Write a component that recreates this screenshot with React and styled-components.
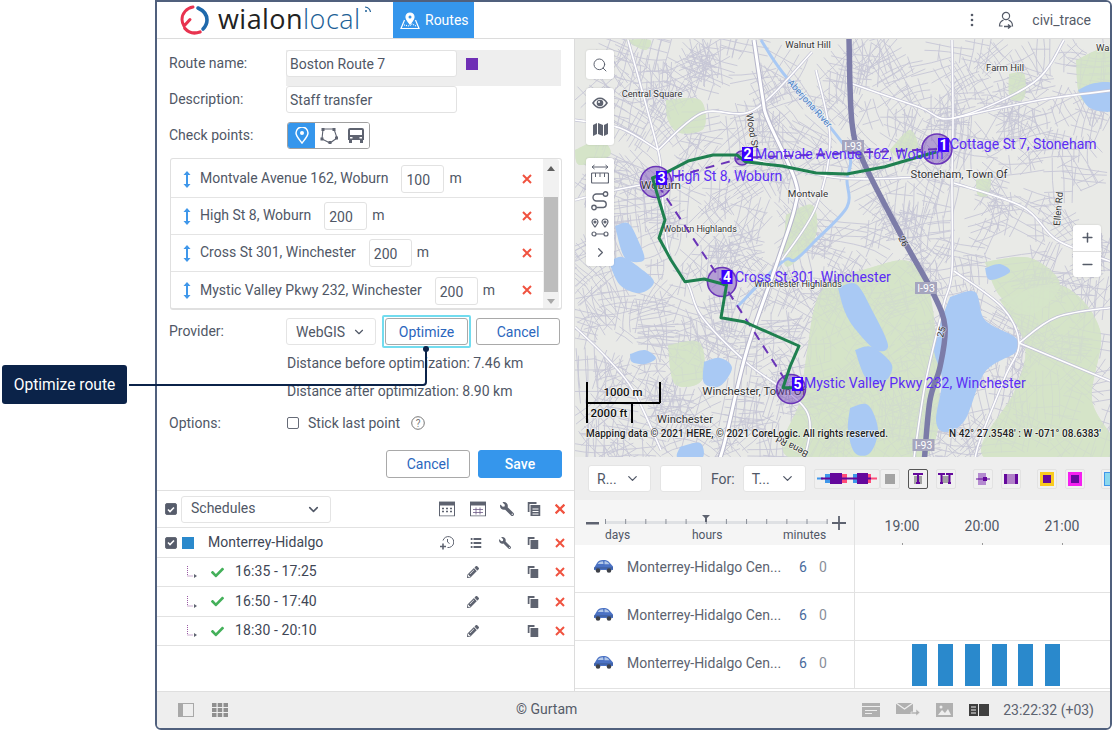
import React from 'react';
import styled, { createGlobalStyle } from 'styled-components';
import { FaWrench, FaPencilAlt, FaCheck } from 'react-icons/fa';
import { ChevronDown, ChevronRight, Search, Plus, Minus } from 'lucide-react';

const GlobalStyle = createGlobalStyle`
  html, body { margin: 0; height: 100%; overflow: hidden; background: #fff; }
  body { font-family: Roboto, "Liberation Sans", sans-serif; font-size: 14px; color: #505766; }
  * { box-sizing: border-box; }
`;

const Page = styled.div`position: relative; width: 1113px; height: 730px; padding-left: 155px;`;
const Frame = styled.div`
  width: 957px; height: 730px; border: 2px solid #50607d; border-radius: 0 6px 6px 6px;
  display: flex; flex-direction: column; overflow: hidden; background: #fff;
`;
const Header = styled.header`
  height: 37px; flex: none; display: flex; align-items: stretch; border-bottom: 1px solid #dcdcdc; background: #fff;
`;
const Logo = styled.div`width: 236px; display: flex; align-items: center; padding-left: 23px; gap: 8px; flex: none;`;
const Wordmark = styled.span`
  font-family: "Open Sans", sans-serif; font-weight: 400; font-size: 27px; line-height: 30px; color: #222;
  letter-spacing: 0.45px; position: relative; top: -1px;
  b { font-weight: 300; color: #1d5f96; }
`;
const Tab = styled.div`
  width: 81px; background: #3596ec; color: #fff; display: flex; align-items: center; gap: 5px; padding-left: 7px; font-size: 14px;
`;
const HeaderRight = styled.div`
  margin-left: auto; display: flex; align-items: center; padding-right: 19px; color: #555b68; font-size: 14px;
`;
const UserName = styled.span`margin-left: 18px;`;
const UserIcon = styled.span`display: flex; margin-left: 24px;`;

const Main = styled.div`flex: 1; display: flex; min-height: 0;`;
const Left = styled.div`width: 418px; flex: none; display: flex; flex-direction: column; border-right: 1px solid #dcdcdc;`;
const Form = styled.div`padding: 11px 13px 0 12px; height: 451px; flex: none;`;
const Row = styled.div`
  display: grid; grid-template-columns: 117px 1fr; align-items: ${p => p.$align || 'start'};
  margin-top: ${p => p.$mt || 0}px;
`;
const Label = styled.div`line-height: 26px; color: #505766;`;
const NameCell = styled.div`height: 36px; background: #eeeeee; display: flex; align-items: flex-start;`;
const Input = styled.div`
  width: ${p => p.$w || 171}px; height: ${p => p.$h || 27}px; background: #fff; border: 1px solid #e2e2e2; border-radius: 3px;
  padding-left: 3px; line-height: 26px; color: #505766; flex: none;
`;
const Swatch = styled.div`width: 12px; height: 12px; background: ${p => p.$c}; margin: ${p => p.$m || '8px 0 0 9px'};`;
const Seg = styled.div`
  width: 83px; height: 27px; display: flex; border: 1px solid #a0a0a0; border-radius: 3px; overflow: hidden; margin-left: 1px;
`;
const SegItem = styled.div`
  width: ${p => p.$w || 27}px; display: flex; align-items: center; justify-content: center; background: ${p => p.$on ? '#3596ec' : '#fff'};
`;
const ListBox = styled.div`
  margin: 9px 0 0 1px; height: 152px; border: 1px solid #e0e0e0; border-bottom-width: 2px; border-radius: 3px; display: flex; padding-top: 2px; width: 392px;
`;
const ListRows = styled.div`flex: 1; min-width: 0;`;
const Point = styled.div`
  height: 37px; display: flex; align-items: center; border-bottom: 1px solid #e4e4e4; padding-left: 12px; position: relative;
  &:last-child { border-bottom: 0; }
`;
const PointName = styled.span`margin-left: 9px; margin-right: 13px; color: #505766; white-space: nowrap; position: relative; top: -1px;`;
const Unit = styled.span`margin-left: 5px; position: relative; top: -1px;`;
const PointDel = styled.span`position: absolute; left: 351px; top: 13px; display: flex;`;
const SmallInput = styled(Input)`width: 43px; height: 28px; line-height: 28px; padding-left: 4px; font-size: 14px;`;
const Scroll = styled.div`width: 16px; background: #f1f1f1; position: relative; margin-top: -2px; flex: none; display: flex; flex-direction: column; align-items: center; margin-right: 2px; border-radius: 0 3px 3px 0;`;
const Thumb = styled.div`position: absolute; left: 1px; right: 1px; top: 38px; height: 95px; background: #bdbdbd;`;
const Arrow = styled.div`
  position: absolute; left: 4px; width: 0; height: 0; border-left: 4px solid transparent; border-right: 4px solid transparent;
  ${p => p.$up ? 'top: 7px; border-bottom: 5px solid #5f5f5f;' : 'bottom: 4px; border-top: 5px solid #a8a8a8;'}
`;
const Controls = styled.div`display: flex; align-items: flex-start;`;
const Select = styled.div`
  width: ${p => p.$w}px; height: 27px; background: #fff; border: 1px solid #e4e4e4; border-radius: 3px; display: flex; align-items: center;
  justify-content: space-between; padding: 0 ${p => p.$pr || 9}px 0 ${p => p.$pl || 9}px; color: #505766; flex: none;
`;
const Btn = styled.button`
  width: ${p => p.$w || 84}px; height: 27px; font: inherit; padding: 0; border: 1px solid ${p => p.$primary ? '#3596ec' : '#a9a9a9'};
  border-radius: 3px; background: ${p => p.$primary ? '#3596ec' : '#fff'}; color: ${p => p.$primary ? '#fff' : '#2b66bd'};
  font-weight: ${p => p.$primary ? 500 : 400}; flex: none;
`;
const FocusRing = styled.div`
  padding: 1px; border: 2px solid #72dcef; margin: -3px 5px 0 6px; height: 33px; border-radius: 2px; flex: none;
`;
const DistanceLine = styled.div`margin-left: 118px; margin-top: ${p => p.$mt || 0}px; line-height: 28px; color: #505766; white-space: nowrap;`;
const Check = styled.span`
  width: 12px; height: 12px; border-radius: 2px; border: 1px solid #666b77; background: ${p => p.$on ? '#565c6b' : '#fff'};
  display: inline-flex; align-items: center; justify-content: center; flex: none;
`;
const Stick = styled.div`display: flex; align-items: center; height: 26px; margin-left: 1px;`;
const StickText = styled.span`margin-left: 9px; margin-right: 11px; white-space: nowrap;`;
const Actions = styled.div`display: flex; justify-content: flex-end; gap: 8px; margin-top: 14px; margin-right: -1px; button { height: 28px; }`;

const Sched = styled.div`border-top: 1px solid #e0e0e0; flex: 1;`;
const SchedRow = styled.div`
  height: ${p => p.$h || 29}px; border-bottom: 1px solid #e2e2e2; display: flex; align-items: center; position: relative; padding-left: ${p => p.$pl || 8}px;
`;
const RowIcons = styled.div`position: absolute; left: 0; top: 0; bottom: 0; right: 0;`;
const IconAt = styled.span`position: absolute; left: ${p => p.$x - 157}px; top: 50%; transform: translate(-50%, -50%); display: flex;`;
const SchedName = styled.span`margin-left: 14px; color: #404655; position: relative; top: -1px;`;
const SchedSelectText = styled.span`position: relative; top: -1px;`;
const TimeText = styled.span`color: #404655; margin-left: 11px; letter-spacing: 0.1px; position: relative; top: -1px;`;
const ElbowWrap = styled.span`display: flex; margin-left: 22px;`;
const CheckWrap = styled.span`display: flex; margin-left: 14px; color: #44b05a;`;

const Right = styled.div`flex: 1; min-width: 0; display: flex; flex-direction: column;`;
const MapPane = styled.div`height: 418px; position: relative; overflow: hidden; flex: none; background: #e9eae7;`;
const MapSvg = styled.svg`display: block; width: 536px; height: 418px;`;
const MapLabel = styled.text`
  font-family: Roboto, sans-serif; font-size: ${p => p.$s || 9.5}px; fill: ${p => p.$c || '#333'}; font-weight: ${p => p.$w || 400};
  paint-order: stroke; stroke: rgba(255,255,255,.65); stroke-width: 1.4px;
`;
const PointLabel = styled.text`font-family: Roboto, sans-serif; font-size: 14px; fill: #5b2df5;`;
const PointNum = styled.text`font-family: Roboto, sans-serif; font-size: 14px; fill: #fff; font-weight: 700;`;
const ToolGroup = styled.div`
  position: absolute; left: 11px; top: ${p => p.$t}px; width: 28px; height: ${p => p.$h}px; background: #fff; border-radius: 3px;
  display: flex; flex-direction: column; align-items: center; justify-content: space-around; box-shadow: 0 0 2px rgba(0,0,0,.15); padding: 2px 0;
`;
const ZoomBox = styled.div`
  position: absolute; left: 498px; top: 186px; width: 28px; height: 52px; background: #fff; border-radius: 3px; color: #555b68;
  display: flex; flex-direction: column; box-shadow: 0 0 2px rgba(0,0,0,.15);
  span { flex: 1; display: flex; align-items: center; justify-content: center; }
  span + span { border-top: 1px solid #ddd; }
`;

const Toolbar = styled.div`height: 43px; background: #eeeeee; display: flex; align-items: center; padding-left: 13px; flex: none; overflow: hidden;`;
const ForLabel = styled.span`margin: 0 8px 0 9px; color: #505766;`;
const TwoBlank = styled.div`width: 42px; height: 27px; background: #fff; border: 1px solid #e4e4e4; border-radius: 3px; margin-left: 9px; flex: none;`;
const TbIcon = styled.div`
  width: ${p => p.$w || 20}px; height: 20px; background: #f0f0f0; border: ${p => p.$on ? '1px solid #555' : '1px solid #e2e2e2'}; border-radius: 2px;
  margin-left: ${p => p.$ml || 0}px; display: flex; align-items: center; justify-content: center; flex: none;
`;

const Timeline = styled.div`flex: 1; display: grid; grid-template-columns: 280px 1fr; grid-template-rows: 45px repeat(3, 48px); min-height: 0;`;
const SliderCell = styled.div`background: #f5f5f5; border-right: 1px solid #e2e2e2; position: relative;`;
const TimeCell = styled.div`background: #f5f5f5; display: flex; position: relative; color: #505766;`;
const Hour = styled.div`
  width: 80px; text-align: center; padding-top: 17px; line-height: 18px; position: relative; flex: none;
  &::after { content: ''; position: absolute; left: 50%; bottom: 0; width: 1px; height: 2px; background: #999; }
`;
const HourPad = styled.div`width: 7px; flex: none;`;
const SlideLabel = styled.span`position: absolute; left: ${p => p.$x}px; top: 28px; font-size: 12px; line-height: 14px; color: #505766;`;
const UnitCell = styled.div`
  border-right: 1px solid #e2e2e2; border-bottom: 1px solid #e2e2e2; background: #fff; display: flex; align-items: center; padding: 0 0 4px 19px;
`;
const UnitName = styled.span`margin-left: 14px; width: 154px; white-space: nowrap; color: #5c6370;`;
const Six = styled.span`margin-left: 18px; color: #4a6a9c;`;
const Zero = styled.span`margin-left: 12px; color: #8a8f99;`;
const GanttCell = styled.div`border-bottom: 1px solid #e2e2e2; background: #fff; position: relative; display: flex; align-items: flex-start; padding-top: ${p => p.$pt || 0}px;`;
const Bar = styled.div`width: 15px; height: 42px; background: #2a89cc; flex: none; margin-left: ${p => p.$ml}px;`;

const StatusBar = styled.footer`
  height: 37px; flex: none; background: #eeeeee; border-top: 1px solid #dfdfdf; display: flex; align-items: center; color: #555b68;
`;
const StatusLeft = styled.div`display: flex; align-items: center; gap: 18px; padding-left: 21px; width: 359px; flex: none;`;
const StatusRight = styled.div`display: flex; align-items: center; margin-left: auto; padding-right: 16px; gap: 16px;`;
const Clock = styled.span`margin-left: -2px; color: #5c6370;`;
const Copyright = styled.span`color: #555b68; position: relative; top: -1px;`;

const Callout = styled.div`
  position: absolute; left: 2px; top: 365px; width: 125px; height: 39px; background: #0b2349; border-radius: 3px; color: #fff;
  display: flex; align-items: center; justify-content: center; font-size: 15.6px;
`;
const Leader = styled.svg`position: absolute; left: 0; top: 0; width: 1113px; height: 730px; pointer-events: none;`;

/* ---------- icons ---------- */
const XMark = ({ s = 10 }) => (
  <svg width={s} height={s} viewBox="0 0 10 10"><path d="M1 1l8 8M9 1L1 9" stroke="#f0523f" strokeWidth="2" /></svg>
);
const UpDown = () => (
  <svg width="8" height="17" viewBox="0 0 8 17" fill="#3f97ea"><path d="M4 0l3.500 4h-2.500v9h2.500l-3.500 4-3.500-4h2.500v-9h-2.500z" /></svg>
);
const CopyIcon = () => (
  <svg width="11" height="12" viewBox="0 0 11 12"><path d="M0 0h7v2H2v6H0z" fill="#5e6370" /><rect x="3" y="3" width="8" height="9" fill="#5e6370" /></svg>
);
const CopyList = () => (
  <svg width="13" height="14" viewBox="0 0 13 14"><path d="M0 0h9v2H2v8H0z" fill="#5e6370" /><rect x="3" y="3" width="10" height="11" fill="#5e6370" /><path d="M5 7h6M5 9.500h6M5 12h6" stroke="#fff" /></svg>
);
const CheckMark = () => (
  <svg width="8" height="7" viewBox="0 0 8 7"><path d="M1 3.500l2 2 4-4" stroke="#fff" strokeWidth="1.600" fill="none" /></svg>
);
const Cal = ({ grid }) => (
  <svg width="16" height="15" viewBox="0 0 16 15">
    <rect x=".5" y=".5" width="15" height="14" fill="#fff" stroke="#5e6370" />
    <rect x="0" y="0" width="16" height="4" fill="#5e6370" />
    {grid
      ? <path d="M3 8h10M3 11h10M6 6v7M10 6v7" stroke="#6d5b86" strokeWidth=".8" />
      : <path d="M3 7h2M7 7h2M11 7h2M3 10h2M7 10h2M11 10h2" stroke="#5e6370" strokeWidth="1.400" />}
  </svg>
);
const ElbowIcon = () => (
  <svg width="10" height="14" viewBox="0 0 10 14" fill="none"><path d="M.5 1v10h6" stroke="#9a5aa5" strokeDasharray="1 1" /><path d="M7 9l3 2-3 2z" fill="#5e6370" /></svg>
);
const ClockPlus = () => (
  <svg width="14" height="15" viewBox="0 0 14 15" fill="none" stroke="#5e6370">
    <path d="M3 5a5.500 5.500 0 1 1 4.500 7" /><path d="M7.500 3.500v3l2 1.500" />
    <path d="M3 8v6M0 11h6" strokeWidth="1.600" />
  </svg>
);
const ListIcon = () => (
  <svg width="11" height="10" viewBox="0 0 11 10" fill="#5e6370"><path d="M0 0h2v2H0zM3 0h8v2H3zM0 4h2v2H0zM3 4h8v2H3zM0 8h2v2H0zM3 8h8v2H3z" /></svg>
);
const PinIcon = () => (
  <svg width="14" height="17" viewBox="0 0 14 17" fill="none"><path d="M7 16C3.500 11.500 1 9 1 6a6 6 0 0 1 12 0c0 3-2.500 5.500-6 10z" stroke="#fff" strokeWidth="1.500" /><circle cx="7" cy="6" r="2" fill="#fff" /></svg>
);
const PolyIcon = () => (
  <svg width="18" height="17" viewBox="0 0 18 17" fill="none" stroke="#5e6370">
    <path d="M3 2h11l3 9-7 5-8-4z" strokeWidth="1.100" />
    <g fill="#5e6370" stroke="none"><rect x="1.500" y="1" width="3" height="3" /><rect x="12.500" y="1" width="3" height="3" /><rect x="15" y="9.500" width="3" height="3" /><rect x="8.500" y="14" width="3" height="3" /><rect x="0.500" y="10.500" width="3" height="3" /></g>
  </svg>
);
const BusIcon = () => (
  <svg width="16" height="15" viewBox="0 0 16 15" fill="#5e6370"><path d="M2 0h12a2 2 0 0 1 2 2v10h-1v3h-3v-3H4v3H1v-3H0V2a2 2 0 0 1 2-2zm0 2v5h12V2zM2 9v1.500h2.500V9zm9.500 0v1.500H14V9z" fillRule="evenodd" /></svg>
);
const HelpIcon = () => (
  <svg width="14" height="14" viewBox="0 0 14 14"><circle cx="7" cy="7" r="6.300" fill="none" stroke="#777" /><text x="7" y="10.500" textAnchor="middle" fontFamily="Roboto" fontSize="10" fill="#777">?</text></svg>
);
const RoutesIcon = () => (
  <svg width="20" height="20" viewBox="0 0 20 20" fill="none" stroke="#fff" strokeWidth="1.200">
    <path d="M4.500 10L1 18.500h18L15.500 10" /><path d="M10 14c-2.500-3-4-4.500-4-7a4 4 0 0 1 8 0c0 2.500-1.500 4-4 7z" fill="#fff" />
    <circle cx="10" cy="7" r="1.500" fill="#3596ec" stroke="none" /><path d="M4 15l5 1 3-2 4 2" strokeDasharray="1 1" />
  </svg>
);
const LogoRing = () => (
  <svg width="30" height="30" viewBox="0 0 30 30" fill="none">
    <path d="M13 2C6.500 3 2 8.500 2 14.500c0 2.500.8 4.500 2 6.500L10 14.500" stroke="#e8334f" strokeWidth="3" strokeLinecap="round" />
    <path d="M5 23.500c3.500 4 9 5.500 15 3.500" stroke="#e8334f" strokeWidth="3.400" strokeLinecap="round" />
    <path d="M18 3c5.500 2.500 9 6.500 9 12 0 3.500-1.500 6.500-4 9" stroke="#1f69ab" strokeWidth="3.600" strokeLinecap="round" />
  </svg>
);
const LogoHook = () => (
  <svg width="10" height="10" viewBox="0 0 10 10" fill="none" stroke="#1d5f96" strokeWidth="1.200" style={{ position: 'relative', top: -9, left: -7 }}><path d="M3 1c3 .3 5 2 5.500 5" /><circle cx="4" cy="5" r="1" fill="#1d5f96" stroke="none" /></svg>
);
const KebabIcon = () => (
  <svg width="4" height="14" viewBox="0 0 4 14" fill="#555b68"><circle cx="2" cy="2" r="1.300" /><circle cx="2" cy="7" r="1.300" /><circle cx="2" cy="12" r="1.300" /></svg>
);
const UserIconSvg = () => (
  <svg width="16" height="18" viewBox="0 0 16 18" fill="none" stroke="#555b68" strokeWidth="1.200">
    <circle cx="8" cy="5" r="3.600" /><path d="M5.500 9c-2.500 1-4 3-4 6h3M10.500 9c2.500 1 4 3 4 6h-1" />
    <path d="M6 15.500h6M10 13.500l2.500 2-2.500 2" strokeWidth="1.400" />
  </svg>
);
const EyeIcon = () => (
  <svg width="16" height="12" viewBox="0 0 16 12"><path d="M0 6c2-3.500 5-5.500 8-5.500S14 2.500 16 6c-2 3.500-5 5.500-8 5.500S2 9.500 0 6z" fill="#5e6370" /><path d="M2 6c1.700-2.500 3.800-4 6-4s4.300 1.500 6 4c-1.700 2.500-3.800 4-6 4S3.700 8.500 2 6z" fill="#fff" /><circle cx="8" cy="6" r="3.300" fill="#5e6370" /><circle cx="7" cy="5" r="1" fill="#fff" /></svg>
);
const MapFold = () => (
  <svg width="15" height="13" viewBox="0 0 15 13" fill="#5e6370"><path d="M0 2l4-2v11l-4 2zM5 0l5 2v11l-5-2zM11 2l4-2v11l-4 2z" /></svg>
);
const RulerIcon = () => (
  <svg width="18" height="20" viewBox="0 0 18 20" fill="none" stroke="#5e6370">
    <path d="M1 3h16M1 3l2.500-2M1 3l2.500 2M17 3l-2.500-2M17 3l-2.500 2" />
    <rect x=".500" y="9" width="17" height="10" rx="1" strokeWidth="1.200" /><path d="M4.500 9v4M9 9v4M13.500 9v4" />
  </svg>
);
const RouteIcon = () => (
  <svg width="18" height="20" viewBox="0 0 18 20" fill="none" stroke="#5e6370" strokeWidth="1.400">
    <circle cx="14.500" cy="3" r="2.200" /><circle cx="3" cy="16.500" r="2.200" />
    <path d="M12 3H5.500a3.500 3.500 0 0 0 0 7h7a3.300 3.300 0 0 1 0 6.500H5.500" />
  </svg>
);
const PinsIcon = () => (
  <svg width="18" height="20" viewBox="0 0 18 20" fill="none" stroke="#5e6370" strokeWidth="1.200">
    <path d="M4 9C2 6.500 1 5.500 1 4a3 3 0 0 1 6 0c0 1.500-1 2.500-3 5zM14 9c-2-2.500-3-3.500-3-5a3 3 0 0 1 6 0c0 1.500-1 2.500-3 5z" /><circle cx="4" cy="4" r="1" fill="#5e6370" /><circle cx="14" cy="4" r="1" fill="#5e6370" />
    <circle cx="3" cy="16" r="2" /><circle cx="15" cy="16" r="2" /><path d="M5 16h8" />
  </svg>
);
const CarIcon = () => (
  <svg width="19" height="13" viewBox="0 0 19 13">
    <path d="M0 8l3-5c1-2 3-3 6-3s5 .5 6.500 2.500L19 6.500V10H0z" fill="#4b72c4" />
    <path d="M4 3.500C5 2 7 1.300 9 1.300l.5 2.700H3.800zM10.500 1.300c1.500 0 3 .5 4 1.700l1 1.300h-5z" fill="#b3c8e8" />
    <path d="M0 8h19" stroke="#3a568f" />
    <circle cx="4" cy="10.500" r="2.300" fill="#3e4148" /><circle cx="15" cy="10.500" r="2.300" fill="#3e4148" />
  </svg>
);

/* toolbar glyphs */
const Ptrack = () => (
  <svg width="60" height="13" viewBox="0 0 60 13">
    <path d="M0 6.500h6" stroke="#3f97ea" strokeWidth="2" /><path d="M54 6.500h6" stroke="#ff4d79" strokeWidth="2" />
    <rect x="8" y="2" width="8" height="9" fill="#3f97ea" /><rect x="24" y="2" width="6" height="9" fill="#ff4d79" />
    <rect x="36" y="2" width="8" height="9" fill="#3f97ea" /><rect x="48" y="2" width="6" height="9" fill="#ff4d79" />
    <rect x="13" y="1" width="12" height="11" fill="#64089c" /><rect x="40" y="1" width="11" height="11" fill="#64089c" />
    <path d="M4 6.500h50" stroke="#64089c" strokeWidth="2" />
  </svg>
);
const GreySq = () => <svg width="10" height="10"><rect width="10" height="10" fill="#a3a3a3" /></svg>;
const TIcon = ({ two }) => (
  <svg width={two ? 15 : 10} height="11" viewBox={two ? '0 0 15 11' : '0 0 10 11'}>
    {two ? <>
      <rect x="3" y="3" width="9" height="7" fill="#a3a3a3" />
      <path d="M0 1h7M3.500 1v9M2 10h3M8 1h7M11.500 1v9M10 10h3" stroke="#64089c" strokeWidth="2" fill="none" />
    </> : <>
      <rect x="1" y="3" width="8" height="8" fill="#a3a3a3" />
      <path d="M0 1h10M5 1v9M3 10h4" stroke="#64089c" strokeWidth="2" fill="none" />
    </>}
  </svg>
);
const ConnectIcon = () => (
  <svg width="14" height="12" viewBox="0 0 14 12"><rect x="2" y="0" width="8" height="12" fill="#b48ad0" /><path d="M0 6h14" stroke="#64089c" /><rect x="7" y="4" width="4" height="4" fill="#64089c" /></svg>
);
const BandIcon = () => (
  <svg width="14" height="10" viewBox="0 0 14 10"><rect width="14" height="10" fill="#b080c8" /><rect width="3" height="10" fill="#64089c" /><rect x="11" width="3" height="10" fill="#64089c" /></svg>
);
const FrameSq = ({ c }) => (
  <svg width="14" height="14" viewBox="0 0 14 14"><rect width="14" height="14" fill={c} /><rect x="3" y="3" width="8" height="8" fill="#64089c" /></svg>
);
const CyanIcon = () => (
  <svg width="14" height="14" viewBox="0 0 14 14"><rect x=".5" y=".5" width="13" height="13" fill="#8bd8ee" stroke="#3f97ea" /></svg>
);

/* status glyphs */
const PanelIcon = () => (
  <svg width="16" height="14" viewBox="0 0 16 14"><rect x=".500" y=".500" width="15" height="13" fill="#eee" stroke="#a8a8a8" /><rect width="5" height="14" fill="#a8a8a8" /></svg>
);
const GridIcon = () => (
  <svg width="16" height="14" viewBox="0 0 16 14" fill="#8f8f8f"><path d="M0 0h4.500v4H0zM5.700 0h4.500v4H5.700zM11.500 0H16v4h-4.500zM0 5h4.500v4H0zM5.700 5h4.500v4H5.700zM11.500 5H16v4h-4.500zM0 10h4.500v4H0zM5.700 10h4.500v4H5.700zM11.500 10H16v4h-4.500z" /></svg>
);
const TrayIcon = () => (
  <svg width="18" height="14" viewBox="0 0 18 14"><rect width="18" height="14" fill="#b0b0b0" /><rect y="3" width="18" height="1" fill="#eee" /><path d="M3 7.500h12M3 10.500h7" stroke="#eee" /></svg>
);
const MailIcon = () => (
  <svg width="24" height="14" viewBox="0 0 24 14"><rect width="17" height="11" fill="#b0b0b0" /><path d="M0 0l8.500 6L17 0" stroke="#eee" strokeWidth="1.300" fill="none" /><path d="M15 9h5V6l4 3.500-4 3.500v-2h-5z" fill="#b0b0b0" stroke="#eee" strokeWidth=".6" /></svg>
);
const ImageIcon = () => (
  <svg width="17" height="14" viewBox="0 0 17 14"><rect width="17" height="14" fill="#b0b0b0" /><path d="M2 12l4-5 3 3 3-4 3 6z" fill="#eee" /><circle cx="5" cy="4" r="1.500" fill="#eee" /></svg>
);
const BookIcon = () => (
  <svg width="20" height="12" viewBox="0 0 20 12"><rect width="9" height="12" fill="#3f3f3f" /><rect x="10" width="10" height="12" fill="#3f3f3f" /><path d="M2 3h5M2 6h5M2 9h5" stroke="#eee" /></svg>
);

/* ---------- map drawing ---------- */
const toPath = pts => 'M' + pts.map(p => p.join(' ')).join('L');
function smooth(pts) {
  let d = `M${pts[0][0]} ${pts[0][1]}`;
  for (let i = 0; i < pts.length - 1; i++) {
    const p0 = pts[i - 1] || pts[i], p1 = pts[i], p2 = pts[i + 1], p3 = pts[i + 2] || p2;
    d += `C${(p1[0] + (p2[0] - p0[0]) / 6).toFixed(1)} ${(p1[1] + (p2[1] - p0[1]) / 6).toFixed(1)} ${(p2[0] - (p3[0] - p1[0]) / 6).toFixed(1)} ${(p2[1] - (p3[1] - p1[1]) / 6).toFixed(1)} ${p2[0]} ${p2[1]}`;
  }
  return d;
}
function closed(pts) { return smooth([...pts, pts[0]]) + 'Z'; }

function buildStreets() {
  let seed = 20211;
  const r = () => { seed |= 0; seed = seed + 0x6D2B79F5 | 0; let t = Math.imul(seed ^ seed >>> 15, 1 | seed); t = t + Math.imul(t ^ t >>> 7, 61 | t) ^ t; return ((t ^ t >>> 14) >>> 0) / 4294967296; };
  let d = '';
  for (let i = 0; i < 560; i++) {
    const cx = 575 + r() * 540, cy = 39 + r() * 420;
    const a = r() * Math.PI;
    const ca = Math.cos(a), sa = Math.sin(a);
    const n = 2 + Math.floor(r() * 3);
    const len = 10 + r() * 16;
    const gap = 6 + r() * 4;
    const pt = (u, v) => `${(cx + u * ca - v * sa).toFixed(1)} ${(cy + u * sa + v * ca).toFixed(1)}`;
    for (let k = 0; k < n; k++) {
      const v = (k - n / 2) * gap;
      const b = (r() - .5) * 8;
      d += `M${pt(-len, v)}Q${pt(0, v + b)} ${pt(len, v + (r() - .5) * 4)}`;
    }
    d += `M${pt(-len * .4, -n / 2 * gap)}L${pt(-len * .4, n / 2 * gap)}`;
    if (r() > .5) d += `M${pt(len * .5, -n / 2 * gap)}L${pt(len * .5, n / 2 * gap)}`;
  }
  return d;
}
const STREETS = buildStreets();

const MAJOR = [
  [[628, 40], [640, 83], [658, 150], [661, 173], [668, 250], [688, 284], [702, 317], [747, 363], [806, 410], [805, 458]],
  [[658, 150], [702, 113], [754, 110], [812, 52]],
  [[575, 120], [620, 128], [658, 150]],
  [[850, 83], [919, 107], [954, 118], [1033, 83], [1064, 40]],
  [[954, 118], [1040, 100], [1115, 90]],
  [[816, 70], [830, 140], [816, 207], [782, 260]],
  [[952, 40], [953, 118], [952, 180], [952, 270], [945, 300], [940, 320], [925, 385], [914, 458]],
  [[954, 183], [1023, 207], [1057, 240], [1112, 262]],
  [[954, 271], [1002, 307], [1019, 343], [1005, 377], [981, 437], [975, 458]],
  [[1019, 343], [1115, 383]],
  [[1019, 343], [1057, 317], [1115, 307]],
  [[575, 327], [606, 357], [633, 390], [661, 450]],
  [[737, 155], [840, 178], [952, 175]],
  [[575, 200], [615, 190], [656, 182]],
];
const WATER = [
  [[950, 297], [975, 292], [985, 320], [1016, 338], [1016, 352], [985, 372], [965, 420], [945, 432], [936, 420], [942, 380], [934, 345]],
  [[609, 262], [622, 257], [640, 268], [654, 282], [640, 293], [620, 285]],
  [[615, 226], [628, 223], [638, 240], [644, 260], [625, 258]],
  [[838, 288], [856, 284], [872, 310], [888, 345], [876, 350], [856, 330], [845, 312]],
  [[855, 350], [872, 347], [892, 365], [884, 382], [866, 378]],
  [[850, 408], [868, 405], [878, 430], [870, 453], [855, 453], [848, 430]],
  [[1078, 90], [1095, 83], [1115, 85], [1115, 110], [1090, 108]],
  [[704, 362], [720, 358], [732, 368], [720, 386], [704, 383]],
  [[630, 354], [645, 350], [656, 358], [645, 364], [632, 362]],
  [[680, 447], [700, 443], [702, 458], [678, 458]],
  [[985, 268], [1000, 264], [1010, 272], [990, 280]],
];
const GREEN = [
  [[808, 345], [822, 290], [870, 268], [915, 265], [935, 330], [925, 458], [790, 458], [800, 400]],
  [[1000, 300], [1060, 285], [1100, 330], [1092, 400], [1113, 458], [985, 458], [1015, 390], [1025, 345]],
  [[985, 262], [1030, 258], [1060, 285], [1030, 315], [1000, 296]],
  [[666, 100], [700, 100], [704, 128], [680, 133], [668, 120]],
  [[1009, 74], [1024, 74], [1024, 98], [1010, 98]],
  [[890, 150], [910, 130], [918, 150], [900, 158]],
  [[786, 215], [812, 205], [816, 235], [795, 262], [784, 262]],
  [[1076, 60], [1110, 50], [1113, 102], [1082, 100]],
  [[668, 345], [700, 343], [702, 380], [675, 384]],
  [[625, 40], [650, 40], [645, 50]],
  [[575, 150], [600, 140], [610, 155], [580, 165]],
  [[976, 180], [990, 178], [988, 195], [978, 195]],
];
const ROUTE = [[936.6, 151.7], [919, 156.7], [885, 166.7], [847, 174], [816, 173], [782, 166], [745.5, 161.7], [737, 155], [713, 155], [689, 160.7], [668, 171.7], [652.5, 178], [659, 200], [665, 220], [659, 238], [671, 260], [685, 281.7], [704, 279], [726.5, 285], [721, 317.7], [744, 321.7], [799, 346], [790, 366.7], [783, 387.7], [792, 387.7]];

const CIRCLES = [[937, 149, 15], [742, 158, 7], [656, 182, 15.5], [722, 282, 14.5], [791, 389, 14.5]];
const NUMS = [[938, 138, 1], [742, 147, 2], [656, 171, 3], [721.5, 270, 4], [792, 377, 5]];
const POINT_TEXT = [
  [950, 149, 'Cottage St 7, Stoneham'], [755, 159, 'Montvale Avenue 162, Woburn'], [671, 181, 'High St 8, Woburn'],
  [735, 282, 'Cross St 301, Winchester'], [804, 388, 'Mystic Valley Pkwy 232, Winchester'],
];
const Shield = ({ x, y, t = 'I-93' }) => (
  <g>
    <rect x={x - 11} y={y - 6} width="22" height="12" fill="#a5a5be" />
    <MapLabel x={x} y={y + 4} $c="#fff" $s={10.500} textAnchor="middle" style={{ stroke: 'none' }}>{t}</MapLabel>
  </g>
);
const MapDrawing = () => (
  <MapSvg viewBox="575 39 536 418">
    <rect x="575" y="39" width="540" height="420" fill="#e9eae7" />
    {GREEN.map((g, i) => <path key={i} d={closed(g)} fill="#d3e2c5" />)}
    <path d={STREETS} fill="none" stroke="#c6c6d6" strokeWidth=".9" />
    {GREEN.map((g, i) => <path key={i} d={closed(g)} fill="#d6e4c9" fillOpacity=".72" />)}
    <path d={smooth([[761, 40], [783, 73], [830, 127], [850, 157], [847, 180], [847, 207], [816, 240], [795, 260], [782, 262], [737, 307]])} fill="none" stroke="#a9c9f4" strokeWidth="3" />
    {WATER.map((g, i) => <path key={i} d={closed(g)} fill="#a9c9f4" />)}
    {MAJOR.map((m, i) => <path key={i} d={smooth(m)} fill="none" stroke="#c4c4d6" strokeWidth="3" />)}
    {MAJOR.map((m, i) => <path key={i} d={smooth(m)} fill="none" stroke="#fff" strokeWidth="1.600" />)}
    <path d={smooth([[754, 40], [763, 100], [768, 120], [795, 180], [795, 207], [778, 260], [747, 350], [726, 437], [720, 458]])} fill="none" stroke="#b5b5ca" strokeWidth="5" />
    <path d={smooth([[754, 40], [763, 100], [768, 120], [795, 180], [795, 207], [778, 260], [747, 350], [726, 437], [720, 458]])} fill="none" stroke="#fff" strokeWidth="3" />
    <path d={smooth([[849, 39], [852, 123], [864, 163], [902, 237], [933, 293], [945, 327], [940, 367], [930, 400], [924.500, 458]])} fill="none" stroke="#7c7ca8" strokeWidth="5.500" />

    <MapLabel x="808" y="48" $s={9.500} textAnchor="middle">Walnut Hill</MapLabel>
    <MapLabel x="1005" y="71" $s={9.500} textAnchor="middle">Farm Hill</MapLabel>
    <MapLabel x="652" y="97" $s={9.300} textAnchor="middle">Central Square</MapLabel>
    <MapLabel x="1096" y="51" $s={9.500}>Wak</MapLabel>
    <MapLabel transform="translate(746 114) rotate(80)">Wood St</MapLabel>
    <MapLabel transform="translate(787 83) rotate(48)" $c="#4e7fc0">Aberjona River</MapLabel>
    <MapLabel transform="translate(1060 226) rotate(-85)">Ellen Rd</MapLabel>
    <MapLabel transform="translate(898 238) rotate(62)">26</MapLabel>
    <MapLabel transform="translate(943 338) rotate(-75)">25</MapLabel>
    <MapLabel transform="translate(809 452) rotate(208)">Bena Rd</MapLabel>
    <MapLabel x="959" y="178" $s={11.200} textAnchor="middle">Stoneham, Town Of</MapLabel>
    <MapLabel x="808" y="197" $s={9.800} textAnchor="middle">Montvale</MapLabel>
    <MapLabel x="700" y="232" $s={9} textAnchor="middle">Woburn Highlands</MapLabel>
    <MapLabel x="798" y="287" $s={9} textAnchor="middle">Winchester Highlands</MapLabel>
    <MapLabel x="754" y="395" $s={11.400} textAnchor="middle">Winchester, Town Of</MapLabel>
    <MapLabel x="685" y="423" $s={11.200} textAnchor="middle">Winchester</MapLabel>
    <Shield x={853} y={146} />
    <Shield x={926} y={288} />
    <Shield x={923.500} y={445} />

    <path d="M587 382v41M660 382v21M587 403h73M632 403v20" stroke="#000" strokeWidth="2" fill="none" />
    <MapLabel x="623" y="396" $s={11.500} $w={500} textAnchor="middle" $c="#111">1000 m</MapLabel>
    <MapLabel x="609" y="417" $s={11.500} $w={500} textAnchor="middle" $c="#111">2000 ft</MapLabel>
    <MapLabel x="586" y="437" $s={10} $w={500} $c="#222" textLength="302">Mapping data © 2021 HERE, © 2021 CoreLogic. All rights reserved.</MapLabel>
    <MapLabel x="949" y="437" $s={10} $w={500} $c="#222" textLength="152">N 42° 27.3548' : W -071° 08.6383'</MapLabel>

    {CIRCLES.map(([x, y, r], i) => <circle key={i} cx={x} cy={y} r={r} fill="#6a35b8" fillOpacity=".42" stroke="#6a35b8" strokeWidth="1.600" />)}
    <path d="M937 149L742 158L656 182L722 282L791 389" fill="none" stroke="#6a35b8" strokeWidth="2" strokeDasharray="9 7" />
    <MapLabel x="661" y="189" $s={11.600} textAnchor="middle">Woburn</MapLabel>
    <path d={toPath(ROUTE)} fill="none" stroke="#1f8050" strokeWidth="3" strokeLinejoin="round" />
    {NUMS.map(([x, y, n]) => (
      <g key={n}>
        <rect x={x} y={y} width="11" height="14" fill="#3a00ff" />
        <PointNum x={x + 5.500} y={y + 12} textAnchor="middle">{n}</PointNum>
      </g>
    ))}
    {POINT_TEXT.map(([x, y, t]) => <PointLabel key={t} x={x} y={y}>{t}</PointLabel>)}
  </MapSvg>
);

const POINTS = [
  ['Montvale Avenue 162, Woburn', '100'], ['High St 8, Woburn', '200'],
  ['Cross St 301, Winchester', '200'], ['Mystic Valley Pkwy 232, Winchester', '200'],
];
const TIMES = [['16:35 - 17:25', 29], ['16:50 - 17:40', 30], ['18:30 - 20:10', 29]];
const BAR_GAPS = [57, 11, 12, 12, 11, 12];

const Wrench = ({ s = 12 }) => <FaWrench size={s} color="#5e6370" style={{ transform: 'scaleX(-1)' }} />;

export default function App() {
  return (
    <Page>
      <GlobalStyle />
      <Frame>
        <Header>
          <Logo>
            <LogoRing />
            <Wordmark>wialon<b>local</b></Wordmark>
            <LogoHook />
          </Logo>
          <Tab><RoutesIcon />Routes</Tab>
          <HeaderRight>
            <KebabIcon />
            <UserIcon><UserIconSvg /></UserIcon>
            <UserName>civi_trace</UserName>
          </HeaderRight>
        </Header>
        <Main>
          <Left>
            <Form>
              <Row>
                <Label>Route name:</Label>
                <NameCell>
                  <Input>Boston Route 7</Input>
                  <Swatch $c="#6f2fb5" />
                </NameCell>
              </Row>
              <Row>
                <Label>Description:</Label>
                <Input>Staff transfer</Input>
              </Row>
              <Row $mt={9}>
                <Label>Check points:</Label>
                <Seg>
                  <SegItem $on><PinIcon /></SegItem>
                  <SegItem><PolyIcon /></SegItem>
                  <SegItem><BusIcon /></SegItem>
                </Seg>
              </Row>
              <ListBox>
                <ListRows>
                  {POINTS.map(([name, val]) => (
                    <Point key={name}>
                      <UpDown />
                      <PointName>{name}</PointName>
                      <SmallInput>{val}</SmallInput>
                      <Unit>m</Unit>
                      <PointDel><XMark /></PointDel>
                    </Point>
                  ))}
                </ListRows>
                <Scroll><Arrow $up /><Thumb /><Arrow /></Scroll>
              </ListBox>
              <Row $mt={8}>
                <Label>Provider:</Label>
                <Controls>
                  <Select $w={90}>WebGIS<ChevronDown size={14} strokeWidth={2} color="#505766" /></Select>
                  <FocusRing><Btn $w={83}>Optimize</Btn></FocusRing>
                  <Btn>Cancel</Btn>
                </Controls>
              </Row>
              <DistanceLine $mt={1}>Distance before optimization: 7.46 km</DistanceLine>
              <DistanceLine>Distance after optimization: 8.90 km</DistanceLine>
              <Row $mt={5}>
                <Label>Options:</Label>
                <Stick>
                  <Check />
                  <StickText>Stick last point</StickText>
                  <HelpIcon />
                </Stick>
              </Row>
              <Actions>
                <Btn>Cancel</Btn>
                <Btn $primary>Save</Btn>
              </Actions>
            </Form>
            <Sched>
              <SchedRow $h={37}>
                <Check $on><CheckMark /></Check>
                <Select $w={150} style={{ marginLeft: 4 }}><SchedSelectText>Schedules</SchedSelectText><ChevronDown size={15} strokeWidth={2.5} color="#505766" /></Select>
                <RowIcons>
                  <IconAt $x={447}><Cal /></IconAt>
                  <IconAt $x={478}><Cal grid /></IconAt>
                  <IconAt $x={507}><Wrench s={14} /></IconAt>
                  <IconAt $x={534}><CopyList /></IconAt>
                  <IconAt $x={560}><XMark s={11} /></IconAt>
                </RowIcons>
              </SchedRow>
              <SchedRow $h={30}>
                <Check $on><CheckMark /></Check>
                <Swatch $c="#2a89cc" $m="0 0 0 5px" />
                <SchedName>Monterrey-Hidalgo</SchedName>
                <RowIcons>
                  <IconAt $x={447}><ClockPlus /></IconAt>
                  <IconAt $x={476}><ListIcon /></IconAt>
                  <IconAt $x={505}><Wrench /></IconAt>
                  <IconAt $x={533}><CopyIcon /></IconAt>
                  <IconAt $x={560}><XMark /></IconAt>
                </RowIcons>
              </SchedRow>
              {TIMES.map(([t, h]) => (
                <SchedRow key={t} $h={h}>
                  <ElbowWrap><ElbowIcon /></ElbowWrap>
                  <CheckWrap><FaCheck size={13} /></CheckWrap>
                  <TimeText>{t}</TimeText>
                  <RowIcons>
                    <IconAt $x={473}><FaPencilAlt size={12} color="#5e6370" /></IconAt>
                    <IconAt $x={533}><CopyIcon /></IconAt>
                    <IconAt $x={560}><XMark /></IconAt>
                  </RowIcons>
                </SchedRow>
              ))}
            </Sched>
          </Left>
          <Right>
            <MapPane>
              <MapDrawing />
              <ToolGroup $t={11} $h={29}><Search size={16} strokeWidth={1.5} color="#5e6370" /></ToolGroup>
              <ToolGroup $t={49} $h={57}><EyeIcon /><MapFold /></ToolGroup>
              <ToolGroup $t={119} $h={108}>
                <RulerIcon /><RouteIcon /><PinsIcon />
                <ChevronRight size={15} strokeWidth={2} color="#5e6370" />
              </ToolGroup>
              <ZoomBox>
                <span><Plus size={15} strokeWidth={2.4} /></span>
                <span><Minus size={15} strokeWidth={2.4} /></span>
              </ZoomBox>
            </MapPane>
            <Toolbar>
              <Select $w={63} $pl={8} $pr={10}>R...<ChevronDown size={15} strokeWidth={2} color="#505766" /></Select>
              <TwoBlank />
              <ForLabel>For:</ForLabel>
              <Select $w={63} $pl={8} $pr={10}>T...<ChevronDown size={15} strokeWidth={2} color="#505766" /></Select>
              <TbIcon $w={66} $ml={8}><Ptrack /></TbIcon>
              <TbIcon><GreySq /></TbIcon>
              <TbIcon $on $ml={8}><TIcon /></TbIcon>
              <TbIcon $ml={8}><TIcon two /></TbIcon>
              <TbIcon $ml={17}><ConnectIcon /></TbIcon>
              <TbIcon $ml={8}><BandIcon /></TbIcon>
              <TbIcon $ml={16}><FrameSq c="#f9cb1f" /></TbIcon>
              <TbIcon $ml={8}><FrameSq c="#f51ff0" /></TbIcon>
              <TbIcon $ml={16}><CyanIcon /></TbIcon>
            </Toolbar>
            <Timeline>
              <SliderCell>
                <svg width="280" height="30" viewBox="0 0 280 30" style={{ display: 'block' }}>
                  <rect x="11" y="22" width="13" height="2.500" fill="#5e6370" />
                  <rect x="30" y="21" width="222" height="3" fill="#dfe1e4" />
                  {Array.from({ length: 12 }, (_, i) => <rect key={i} x={30 + i * 20.150} y="19" width="1" height="5" fill="#8a8f99" />)}
                  <path d="M127 15h8l-3 3v4h-2v-4z" fill="#5e6370" />
                  <path d="M257 23h14M264 16v14" stroke="#5e6370" strokeWidth="1.800" />
                </svg>
                <SlideLabel $x={30}>days</SlideLabel>
                <SlideLabel $x={117}>hours</SlideLabel>
                <SlideLabel $x={208}>minutes</SlideLabel>
              </SliderCell>
              <TimeCell>
                <HourPad />
                <Hour>19:00</Hour><Hour>20:00</Hour><Hour>21:00</Hour>
              </TimeCell>
              {[0, 1, 2].map(i => (
                <React.Fragment key={i}>
                  <UnitCell>
                    <CarIcon />
                    <UnitName>Monterrey-Hidalgo Cen...</UnitName>
                    <Six>6</Six><Zero>0</Zero>
                  </UnitCell>
                  <GanttCell $pt={i === 2 ? 3 : 0}>
                    {i === 2 && BAR_GAPS.map((m, k) => <Bar key={k} $ml={m} />)}
                  </GanttCell>
                </React.Fragment>
              ))}
            </Timeline>
          </Right>
        </Main>
        <StatusBar>
          <StatusLeft><PanelIcon /><GridIcon /></StatusLeft>
          <Copyright>© Gurtam</Copyright>
          <StatusRight>
            <TrayIcon /><MailIcon /><ImageIcon /><BookIcon />
            <Clock>23:22:32 (+03)</Clock>
          </StatusRight>
        </StatusBar>
      </Frame>
      <Leader viewBox="0 0 1113 730">
        <circle cx="426" cy="349" r="3" fill="#0b2349" />
        <path d="M129 385h294a3 3 0 0 0 3-3v-33" fill="none" stroke="#0b2349" strokeWidth="2" />
      </Leader>
      <Callout>Optimize route</Callout>
    </Page>
  );
}
